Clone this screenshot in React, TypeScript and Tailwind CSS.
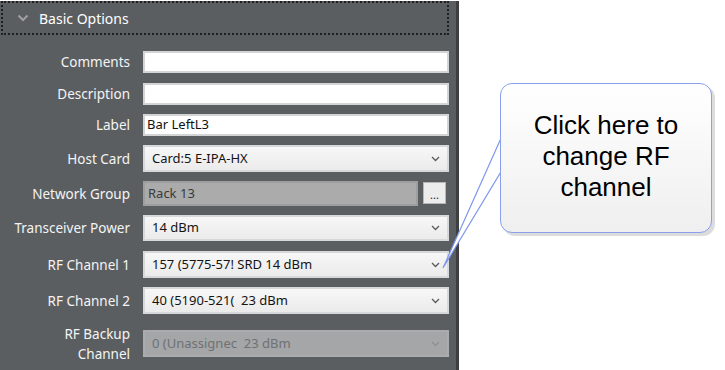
import { ReactNode } from 'react';

const font = { fontFamily: '"Noto Sans", "Liberation Sans", sans-serif' };

const Chevron = ({ color = '#5a5a5a' }: { color?: string }) => (
  <svg width="9" height="6" viewBox="0 0 9 6" className="shrink-0">
    <path d="M1 1 L4.5 4.5 L8 1" fill="none" stroke={color} strokeWidth="1.3" />
  </svg>
);

const Row = ({ label, className, children }: { label: ReactNode; className: string; children: ReactNode }) => (
  <div className={`flex items-center ${className}`}>
    <div className="w-[130px] shrink-0 text-right text-[13.5px] leading-[20px] text-[#f4f4f4]">{label}</div>
    <div className="ml-[13px] flex h-full flex-1">{children}</div>
  </div>
);

const TextBox = ({ value = '' }: { value?: string }) => (
  <div className="flex h-full flex-1 items-center border-2 border-[#d2d4d6] bg-white pl-[2px] text-[13px] text-[#111]">
    {value}
  </div>
);

const Select = ({ value, disabled }: { value: string; disabled?: boolean }) => (
  <div
    className={`flex h-full flex-1 items-center justify-between border-2 pl-[7px] pr-[7px] text-[13px] ${
      disabled
        ? 'border-[#a9abad] bg-[#a4a6a8] text-[#6f7173]'
        : 'border-[#d6d8da] bg-gradient-to-b from-[#f7f7f7] to-[#ebebeb] text-[#141414]'
    }`}
  >
    <span className="whitespace-pre">{value}</span>
    <Chevron color={disabled ? '#8e9092' : '#5a5a5a'} />
  </div>
);

export default function App() {
  return (
    <div className="relative h-[370px] w-[725px] overflow-hidden bg-white" style={font}>
      {/* panel */}
      <div className="h-full w-[459px] border-r-[3px] border-[#3d3f41] bg-[#5b5e61] pr-[7px]">
        <div className="ml-[1px] mt-[1px] flex h-[34px] items-center border-2 border-dotted border-[#1e1f20] pl-[14px]">
          <svg width="12" height="8" viewBox="0 0 12 8">
            <path d="M1.5 1.5 L6 6 L10.5 1.5" fill="none" stroke="#9ea0a2" strokeWidth="2" />
          </svg>
          <span className="ml-[10px] text-[14px] text-white">Basic Options</span>
        </div>

        <Row label="Comments" className="mt-[16px] h-[22px]">
          <TextBox />
        </Row>
        <Row label="Description" className="mt-[10px] h-[22px]">
          <TextBox />
        </Row>
        <Row label="Label" className="mt-[9px] h-[22px]">
          <TextBox value="Bar LeftL3" />
        </Row>
        <Row label="Host Card" className="mt-[9px] h-[27px]">
          <Select value="Card:5 E-IPA-HX" />
        </Row>
        <Row label="Network Group" className="mt-[9px] h-[25px]">
          <div className="flex h-full flex-1 items-center border-2 border-[#9c9ea0] bg-[#ababab] pl-[3px] text-[13px] text-[#3a3a3a]">
            Rack 13
          </div>
          <div className="ml-[5px] mr-[3px] mt-[1px] flex h-[22px] w-[23px] items-end justify-center border border-[#b8b8b8] bg-[#ececec] pb-[3px] text-[11px] leading-none text-[#222]">
            ...
          </div>
        </Row>
        <Row label="Transceiver Power" className="mt-[9px] h-[26px]">
          <Select value="14 dBm" />
        </Row>
        <Row label="RF Channel 1" className="mt-[10px] h-[27px]">
          <Select value="157 (5775-57! SRD 14 dBm" />
        </Row>
        <Row label="RF Channel 2" className="mt-[9px] h-[27px]">
          <Select value="40 (5190-521(  23 dBm" />
        </Row>
        <Row
          label={
            <>
              RF Backup
              <br />
              Channel
            </>
          }
          className="mt-[16px] h-[27px]"
        >
          <Select value="0 (Unassignec  23 dBm" disabled />
        </Row>
      </div>

      {/* callout */}
      <div className="absolute left-[503px] top-[86px] h-[150px] w-[212px] rounded-[12px] bg-[#dcdcdc]" />
      <svg className="absolute left-0 top-0" width="725" height="370">
        <polygon points="502,136 443,268 502,170" fill="#ffffff" stroke="#7f98ee" strokeWidth="1.2" />
      </svg>
      <div className="absolute left-[500px] top-[83px] flex h-[150px] w-[212px] flex-col items-center justify-center rounded-[12px] border-[1.5px] border-[#8aa0ef] bg-gradient-to-b from-white to-[#efefef] pb-[4px] text-center text-[26px] leading-[31px] text-black"
        style={{ fontFamily: '"Liberation Sans", Arial, sans-serif' }}>
        <span>Click here to</span>
        <span>change RF</span>
        <span>channel</span>
      </div>
    </div>
  );
}
